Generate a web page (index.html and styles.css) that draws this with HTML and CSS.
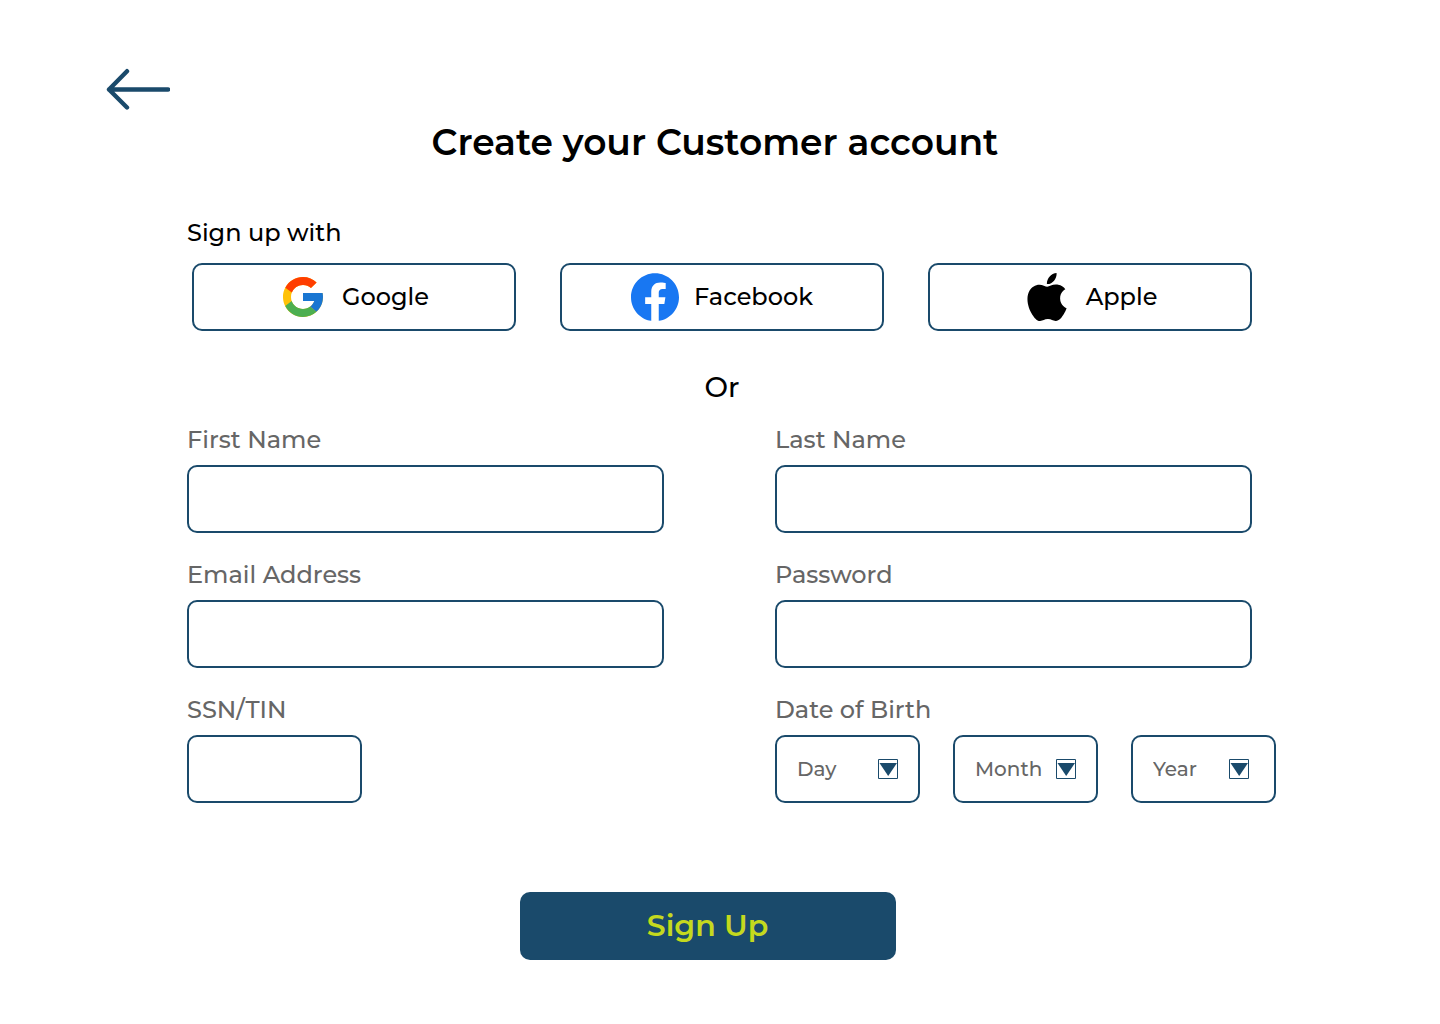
FILE: index.html
```html
<!DOCTYPE html>
<html lang="en">
<head>
  <meta charset="utf-8">
  <meta name="viewport" content="width=device-width, initial-scale=1">
  <title>Create your Customer account</title>
  <link rel="stylesheet" href="styles.css">
</head>
<body>
  <header class="top">
    <a class="back" href="#" aria-label="Back">
      <svg width="64" height="42" viewBox="0 0 64 42" fill="none" stroke="currentColor" stroke-width="4.400" stroke-linecap="round" stroke-linejoin="round"><path d="M62 21.500H3M21 3.200L3 21.500l18 18"/></svg>
    </a>
    <h1 class="title">Create your Customer account</h1>
  </header>

  <main class="content">
    <section class="social">
      <h2 class="social-title">Sign up with</h2>
      <div class="social-list">
        <button class="provider" type="button">
          <svg width="48" height="48" viewBox="0 0 48 48" aria-hidden="true">
            <path fill="#FFC107" d="M43.611 20.083H42V20H24v8h11.303c-1.649 4.657-6.080 8-11.303 8-6.627 0-12-5.373-12-12s5.373-12 12-12c3.059 0 5.842 1.154 7.961 3.039l5.657-5.657C34.046 6.053 29.268 4 24 4 12.955 4 4 12.955 4 24s8.955 20 20 20 20-8.955 20-20c0-1.341-.138-2.650-.389-3.917z"/>
            <path fill="#FF3D00" d="M6.306 14.691l6.571 4.819C14.655 15.108 18.961 12 24 12c3.059 0 5.842 1.154 7.961 3.039l5.657-5.657C34.046 6.053 29.268 4 24 4 16.318 4 9.656 8.337 6.306 14.691z"/>
            <path fill="#4CAF50" d="M24 44c5.166 0 9.860-1.977 13.409-5.192l-6.190-5.238C29.211 35.091 26.715 36 24 36c-5.202 0-9.619-3.317-11.283-7.946l-6.522 5.025C9.505 39.556 16.227 44 24 44z"/>
            <path fill="#1976D2" d="M43.611 20.083H42V20H24v8h11.303c-.792 2.237-2.231 4.166-4.087 5.571l6.193 5.238C36.971 39.205 44 34 44 24c0-1.341-.138-2.650-.389-3.917z"/>
          </svg>
          Google
        </button>
        <button class="provider" type="button">
          <svg width="48" height="48" viewBox="0 0 24 24" aria-hidden="true">
            <path fill="#1877F2" d="M24 12.073c0-6.627-5.373-12-12-12s-12 5.373-12 12c0 5.990 4.388 10.954 10.125 11.854v-8.385H7.078v-3.470h3.047V9.430c0-3.007 1.792-4.669 4.533-4.669 1.312 0 2.686.235 2.686.235v2.953H15.830c-1.491 0-1.956.925-1.956 1.874v2.250h3.328l-.532 3.470h-2.796v8.385C19.612 23.027 24 18.062 24 12.073z"/>
          </svg>
          Facebook
        </button>
        <button class="provider" type="button">
          <svg width="48" height="48" viewBox="0 0 24 24" aria-hidden="true">
            <path d="M12.152 6.896c-.948 0-2.415-1.078-3.960-1.040-2.040.027-3.910 1.183-4.961 3.014-2.117 3.675-.546 9.103 1.519 12.090 1.013 1.454 2.208 3.090 3.792 3.039 1.520-.065 2.090-.987 3.935-.987 1.831 0 2.350.987 3.960.948 1.637-.026 2.676-1.480 3.676-2.948 1.156-1.688 1.636-3.325 1.662-3.415-.039-.013-3.182-1.221-3.220-4.857-.026-3.040 2.480-4.494 2.597-4.559-1.429-2.090-3.623-2.324-4.390-2.376-2-.156-3.675 1.090-4.610 1.090zM15.530 3.830c.843-1.012 1.400-2.427 1.245-3.830-1.207.052-2.662.805-3.532 1.818-.780.896-1.454 2.338-1.273 3.714 1.338.104 2.715-.688 3.559-1.701"/>
          </svg>
          Apple
        </button>
      </div>
    </section>

    <p class="or">Or</p>

    <form class="form">
      <div class="fields">
        <div class="field">
          <label class="label" for="first-name">First Name</label>
          <input class="control" id="first-name" type="text">
        </div>
        <div class="field">
          <label class="label" for="last-name">Last Name</label>
          <input class="control" id="last-name" type="text">
        </div>
        <div class="field">
          <label class="label" for="email">Email Address</label>
          <input class="control" id="email" type="email">
        </div>
        <div class="field">
          <label class="label" for="password">Password</label>
          <input class="control" id="password" type="password">
        </div>
        <div class="field">
          <label class="label" for="ssn">SSN/TIN</label>
          <input class="control control-short" id="ssn" type="text">
        </div>
        <div class="field">
          <label class="label" for="day">Date of Birth</label>
          <div class="dates">
            <div class="date">
              <select class="control select" id="day"><option>Day</option></select>
              <svg class="caret" width="20" height="20" viewBox="0 0 20 20" aria-hidden="true"><path fill="none" stroke="currentColor" d="M.5.5h19v19H.5z"/><path fill="currentColor" d="M1.500 4h17.500L10.200 17z"/></svg>
            </div>
            <div class="date">
              <select class="control select" id="month" aria-label="Month"><option>Month</option></select>
              <svg class="caret" width="20" height="20" viewBox="0 0 20 20" aria-hidden="true"><path fill="none" stroke="currentColor" d="M.5.5h19v19H.5z"/><path fill="currentColor" d="M1.500 4h17.500L10.200 17z"/></svg>
            </div>
            <div class="date date-year">
              <select class="control select" id="year" aria-label="Year"><option>Year</option></select>
              <svg class="caret" width="20" height="20" viewBox="0 0 20 20" aria-hidden="true"><path fill="none" stroke="currentColor" d="M.5.5h19v19H.5z"/><path fill="currentColor" d="M1.500 4h17.500L10.200 17z"/></svg>
            </div>
          </div>
        </div>
      </div>
      <button class="submit" type="submit">Sign Up</button>
    </form>
  </main>
</body>
</html>
```
FILE: styles.css
```css
* {
  box-sizing: border-box;
}

body {
  margin: 0;
  background: #fff;
  color: #000;
  font-family: Montserrat, Inter, sans-serif;
  font-size: 24px;
  font-weight: 500;
  line-height: 30px;
}

h1, h2, p {
  margin: 0;
}

button, input, select {
  font: inherit;
  color: inherit;
}

.top {
  padding: 68px 106px 0;
}

.back {
  display: flex;
  width: 64px;
  color: #1a4a6b;
}

.title {
  margin: 10px 10px 0 0;
  font-size: 36px;
  font-weight: 600;
  line-height: 44px;
  text-align: center;
}

.content {
  padding: 54px 188px 64px 187px;
}

.social {
  display: flex;
  flex-direction: column;
  gap: 15px;
}

.social-title {
  font-size: 24px;
  font-weight: 500;
}

.social-list {
  display: grid;
  grid-template-columns: repeat(3, 1fr);
  gap: 44px;
  padding-left: 5px;
}

.provider {
  display: flex;
  align-items: center;
  justify-content: center;
  gap: 15px;
  height: 68px;
  padding: 0;
  border: 2px solid #1a4a6b;
  border-radius: 10px;
  background: #fff;
}

.or {
  margin: 38px 0 20px 5px;
  font-size: 28px;
  line-height: 36px;
  text-align: center;
}

.form {
  display: flex;
  flex-direction: column;
}

.fields {
  display: grid;
  grid-template-columns: 1fr 1fr;
  gap: 27px 111px;
}

.field {
  display: flex;
  flex-direction: column;
  gap: 10px;
  min-width: 0;
}

.label {
  color: #666;
}

.control {
  width: 100%;
  height: 68px;
  padding: 0 20px;
  border: 2px solid #1a4a6b;
  border-radius: 10px;
  background: #fff;
}

.control-short {
  width: 175px;
}

.dates {
  display: grid;
  grid-template-columns: repeat(3, 1fr);
  gap: 33px;
  margin-right: -24px;
}

.date {
  position: relative;
}

.select {
  appearance: none;
  color: #666;
  font-size: 20px;
}

.caret {
  position: absolute;
  top: 24px;
  right: 22px;
  color: #1a4a6b;
  pointer-events: none;
}

.date-year .caret {
  right: 27px;
}

.submit {
  align-self: center;
  width: 376px;
  height: 68px;
  margin: 89px 24px 0 0;
  border: 0;
  border-radius: 10px;
  background: #1a4a6b;
  color: #c4d91e;
  font-size: 30px;
  font-weight: 600;
}
```
